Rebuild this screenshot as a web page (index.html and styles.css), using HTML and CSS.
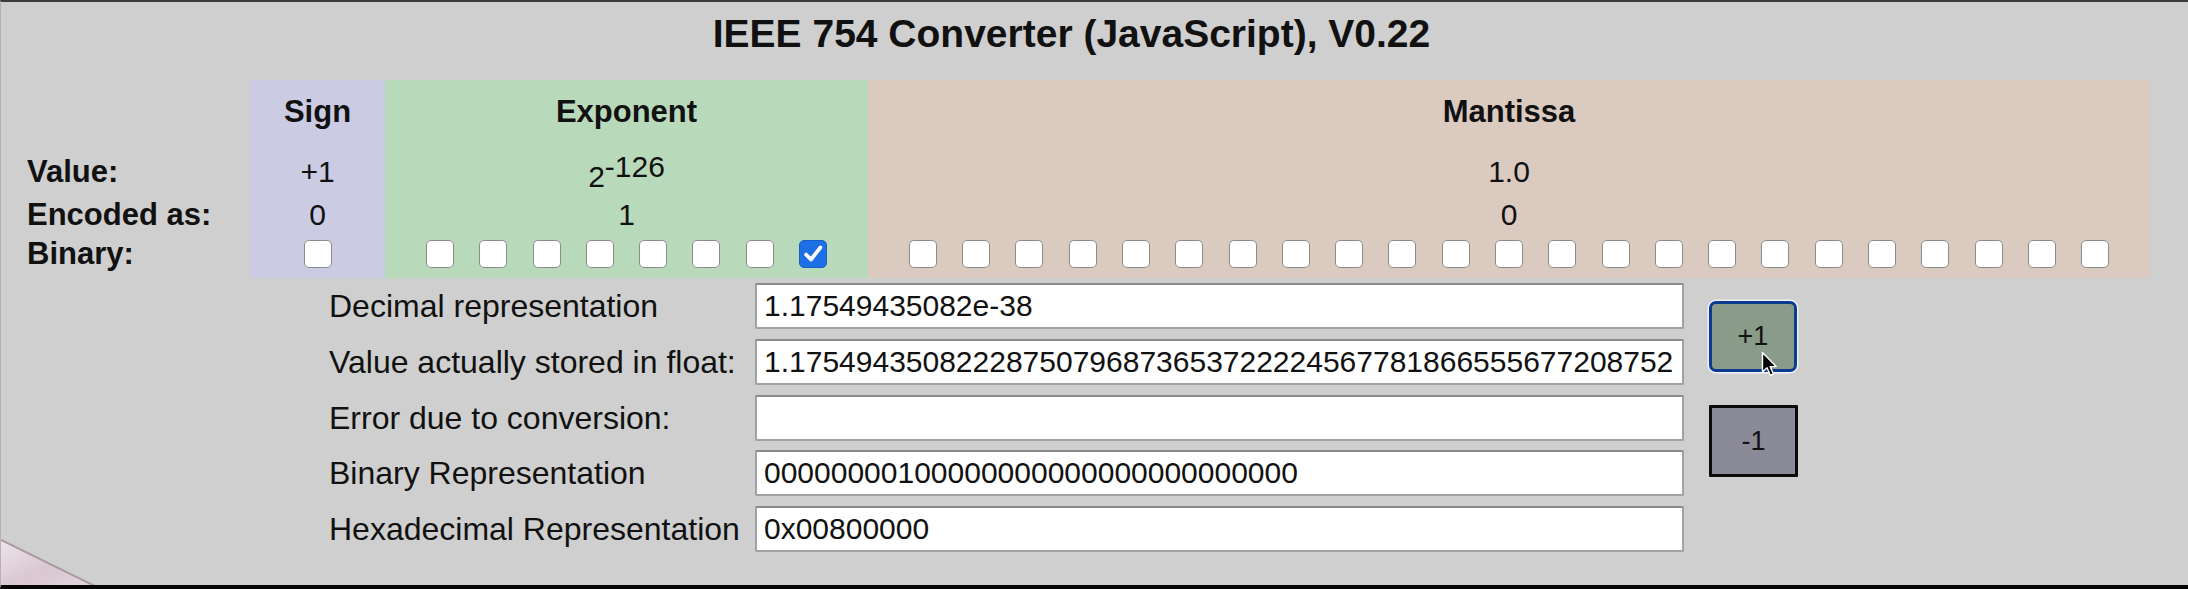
FILE: index.html
```html
<!DOCTYPE html>
<html lang="en">
<head>
<meta charset="utf-8">
<title>IEEE 754 Converter</title>
<link rel="stylesheet" href="styles.css">
</head>
<body>
<div class="page">
  <h1 class="title">IEEE 754 Converter (JavaScript), V0.22</h1>

  <div class="fields">
    <div class="cell lbl r1"></div>
    <div class="cell sign r1 head">Sign</div>
    <div class="cell expo r1 head">Exponent</div>
    <div class="cell mant r1 head">Mantissa</div>

    <div class="cell lbl r2">Value:</div>
    <div class="cell sign r2 val">+1</div>
    <div class="cell expo r2 val"><span class="pow">2<sup>-126</sup></span></div>
    <div class="cell mant r2 val">1.0</div>

    <div class="cell lbl r3">Encoded as:</div>
    <div class="cell sign r3 val">0</div>
    <div class="cell expo r3 val">1</div>
    <div class="cell mant r3 val">0</div>

    <div class="cell lbl r4">Binary:</div>
    <div class="cell sign r4 bits">
      <input type="checkbox" class="bit">
    </div>
    <div class="cell expo r4 bits">
      <input type="checkbox" class="bit"><input type="checkbox" class="bit"><input type="checkbox" class="bit"><input type="checkbox" class="bit"><input type="checkbox" class="bit"><input type="checkbox" class="bit"><input type="checkbox" class="bit"><input type="checkbox" class="bit" checked>
    </div>
    <div class="cell mant r4 bits">
      <input type="checkbox" class="bit"><input type="checkbox" class="bit"><input type="checkbox" class="bit"><input type="checkbox" class="bit"><input type="checkbox" class="bit"><input type="checkbox" class="bit"><input type="checkbox" class="bit"><input type="checkbox" class="bit"><input type="checkbox" class="bit"><input type="checkbox" class="bit"><input type="checkbox" class="bit"><input type="checkbox" class="bit"><input type="checkbox" class="bit"><input type="checkbox" class="bit"><input type="checkbox" class="bit"><input type="checkbox" class="bit"><input type="checkbox" class="bit"><input type="checkbox" class="bit"><input type="checkbox" class="bit"><input type="checkbox" class="bit"><input type="checkbox" class="bit"><input type="checkbox" class="bit"><input type="checkbox" class="bit">
    </div>
  </div>

  <div class="lower">
    <div class="form">
      <label class="flabel">Decimal representation</label>
      <input class="field" type="text" value="1.17549435082e-38">
      <label class="flabel">Value actually stored in float:</label>
      <input class="field" type="text" value="1.17549435082228750796873653722224567781866555677208752">
      <label class="flabel">Error due to conversion:</label>
      <input class="field" type="text" value="">
      <label class="flabel">Binary Representation</label>
      <input class="field" type="text" value="00000000100000000000000000000000">
      <label class="flabel">Hexadecimal Representation</label>
      <input class="field" type="text" value="0x00800000">
    </div>
    <div class="buttons">
      <button class="btn plus" type="button">+1</button>
      <button class="btn minus" type="button">-1</button>
    </div>
  </div>

  <svg class="cursor" width="20" height="28" viewBox="0 0 20 28">
    <path d="M1.5 1.5 L1.5 21 L6 16.8 L9.3 24.3 L12.4 23 L9.2 15.6 L15.2 15.6 Z" fill="#000" stroke="#fff" stroke-width="1.4" stroke-linejoin="round"/>
  </svg>

  <svg class="curl" width="110" height="52" viewBox="0 0 110 52">
    <defs>
      <linearGradient id="cg" x1="0" y1="0" x2="1" y2="1">
        <stop offset="0" stop-color="#efe4ea"/>
        <stop offset="0.5" stop-color="#d9c7d2"/>
        <stop offset="1" stop-color="#e6d8e0"/>
      </linearGradient>
    </defs>
    <polygon points="0,0 104,52 0,52" fill="url(#cg)"/>
    <polyline points="0,1 104,52" fill="none" stroke="#a89aa3" stroke-width="2"/>
  </svg>
</div>
</body>
</html>
```

FILE: styles.css
```css
* { box-sizing: border-box; }

html, body {
  margin: 0;
  padding: 0;
  background: #cfcfcf;
}

body {
  font-family: "Liberation Sans", Arial, sans-serif;
  color: #111;
}

.page {
  position: relative;
  width: 2188px;
  height: 589px;
  overflow: hidden;
  background: #cfcfcf;
  border-top: 2px solid #3a3a3a;
  border-bottom: 4px solid #050505;
  border-left: 1px solid #b3b3b3;
}

.title {
  margin: 0 0 27px 0;
  padding: 13px 46px 0 0;
  font-size: 39px;
  line-height: 38px;
  font-weight: bold;
  text-align: center;
}

/* top field table */
.fields {
  display: grid;
  grid-template-columns: 249px 135px 483px 1282px;
  grid-template-rows: 64px 55px 31px 48px;
}

.cell {
  text-align: center;
  white-space: nowrap;
}

.lbl {
  text-align: left;
  padding-left: 26px;
  font-weight: bold;
  font-size: 31px;
}

.sign { background: #cbcbe3; }
.expo { background: #b9d9bb; }
.mant { background: #dbcabf; }

.head {
  font-weight: bold;
  font-size: 31px;
}

.val { font-size: 30px; }

.r1 { line-height: 64px; }
.r2 { line-height: 55px; }
.r3 { line-height: 31px; }
.r4 { line-height: 48px; }

.pow {
  vertical-align: -5px;
}

.pow sup {
  font-size: 100%;
  vertical-align: 10px;
  line-height: 0;
}

.bits {
  display: flex;
  align-items: center;
  justify-content: center;
  gap: 25.3px;
}

.bit {
  appearance: none;
  -webkit-appearance: none;
  margin: 0;
  width: 28px;
  height: 28px;
  flex: none;
  background: #fff;
  border: 1.5px solid #8c8c8c;
  border-radius: 5px;
}

.bit:checked {
  background: #1d6fe6 url("data:image/svg+xml,%3Csvg xmlns='http://www.w3.org/2000/svg' width='28' height='28' viewBox='0 0 28 28'%3E%3Cpath d='M6.5 14.5 L11.8 20 L22 7' fill='none' stroke='%23ffffff' stroke-width='4' stroke-linecap='round' stroke-linejoin='round'/%3E%3C/svg%3E") center / 26px 26px no-repeat;
  border-color: #1a5fc7;
}

/* lower form */
.lower {
  display: flex;
  align-items: flex-start;
  margin-top: 5px;
  padding-left: 328px;
}

.form {
  display: grid;
  grid-template-columns: 426px 929px;
  grid-auto-rows: 46px;
  row-gap: 9.75px;
}

.flabel {
  font-size: 32px;
  line-height: 46px;
  white-space: nowrap;
}

.field {
  width: 929px;
  height: 46px;
  margin: 0;
  padding: 0 0 0 7px;
  font-family: "Liberation Sans", Arial, sans-serif;
  font-size: 30px;
  color: #111;
  background: #fff;
  border: 2px solid #a2a2a2;
  border-top-color: #8a8a8a;
  border-radius: 2px;
  outline: none;
}

.buttons {
  display: flex;
  flex-direction: column;
  margin-left: 25px;
  padding-top: 18px;
}

.btn {
  font-family: "Liberation Sans", Arial, sans-serif;
  font-size: 27px;
  color: #111;
  padding: 0;
  margin: 0;
  cursor: default;
}

.plus {
  width: 88px;
  height: 71px;
  background: #8b9b89;
  border: 3px solid #0c3a8e;
  border-radius: 7px;
  box-shadow: 0 0 0 1.5px #eef2fa;
}

.minus {
  margin-top: 33px;
  width: 89px;
  height: 72px;
  background: #8a8a99;
  border: 3px solid #0a0a0a;
  border-radius: 1px;
}

.cursor {
  position: absolute;
  left: 1760px;
  top: 349px;
}

.curl {
  position: absolute;
  left: 0;
  top: 537px;
}
```
